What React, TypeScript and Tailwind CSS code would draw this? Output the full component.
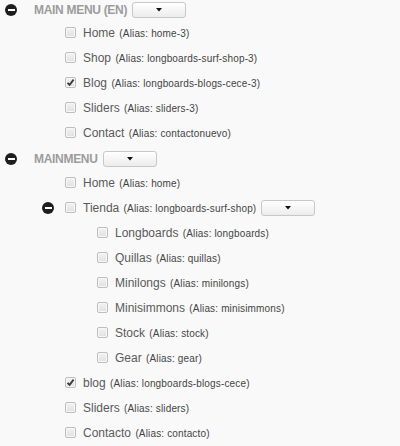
import React from "react";

const Minus = () => (
  <span className="flex h-[12px] w-[12px] shrink-0 items-center justify-center rounded-full bg-[#1e1e1e]">
    <span className="h-[2px] w-[7px] bg-white" />
  </span>
);

const Caret = () => (
  <button className="flex h-[16px] w-[54px] shrink-0 items-center justify-center rounded-[3px] border border-[#c8c8c8] bg-gradient-to-b from-white to-[#ececec] shadow-[inset_0_1px_0_#fff]">
    <svg width="6" height="4" viewBox="0 0 6 4">
      <path d="M0 0 L6 0 L3 3.5 Z" fill="#111" />
    </svg>
  </button>
);

const Check = ({ checked }: { checked?: boolean }) => (
  <span className="flex h-[11px] w-[11px] shrink-0 items-center justify-center rounded-[2px] border border-[#bdbdbd] bg-gradient-to-b from-[#f3f3f3] to-[#e0e0e0] shadow-[inset_0_0_0_1px_#f8f8f8]">
    {checked && (
      <svg width="9" height="9" viewBox="0 0 9 9">
        <path d="M1.5 4.8 L3.6 6.9 L7.6 1.6" stroke="#3a3a3a" strokeWidth="1.8" fill="none" />
      </svg>
    )}
  </span>
);

const Label = ({ name, alias }: { name: string; alias: string }) => (
  <span className="ml-[7px] whitespace-nowrap text-[12px] text-[#5a5a5a]">
    {name}{" "}
    <span className="ml-[1px] text-[10px] tracking-[0.15px] text-[#444]">(Alias: {alias})</span>
  </span>
);

const Item = ({
  name,
  alias,
  checked,
  pl,
}: {
  name: string;
  alias: string;
  checked?: boolean;
  pl: "l1" | "l2";
}) => (
  <div className={`flex h-[25px] items-center ${pl === "l1" ? "pl-[65px]" : "pl-[97px]"}`}>
    <Check checked={checked} />
    <Label name={name} alias={alias} />
  </div>
);

const Heading = ({ title }: { title: string }) => (
  <div className="flex items-center pl-[5px]">
    <Minus />
    <span className="ml-[17px] text-[12px] font-bold tracking-[-0.3px] text-[#9c9c9c]">{title}</span>
    <span className="ml-[5px]">
      <Caret />
    </span>
  </div>
);

export default function App() {
  return (
    <div
      className="h-[446px] w-[400px] overflow-hidden bg-[#f9f9f9]"
      style={{ fontFamily: '"Liberation Sans", Arial, sans-serif' }}
    >
      <div className="flex h-[20px] items-center">
        <Heading title="MAIN MENU (EN)" />
      </div>
      <Item pl="l1" name="Home" alias="home-3" />
      <Item pl="l1" name="Shop" alias="longboards-surf-shop-3" />
      <Item pl="l1" name="Blog" alias="longboards-blogs-cece-3" checked />
      <Item pl="l1" name="Sliders" alias="sliders-3" />
      <Item pl="l1" name="Contact" alias="contactonuevo" />
      <div className="mt-[3px] flex h-[22px] items-center">
        <Heading title="MAINMENU" />
      </div>
      <Item pl="l1" name="Home" alias="home" />
      <div className="flex h-[25px] items-center pl-[42px]">
        <Minus />
        <span className="ml-[11px]">
          <Check />
        </span>
        <Label name="Tienda" alias="longboards-surf-shop" />
        <span className="ml-[5px]">
          <Caret />
        </span>
      </div>
      <Item pl="l2" name="Longboards" alias="longboards" />
      <Item pl="l2" name="Quillas" alias="quillas" />
      <Item pl="l2" name="Minilongs" alias="minilongs" />
      <Item pl="l2" name="Minisimmons" alias="minisimmons" />
      <Item pl="l2" name="Stock" alias="stock" />
      <Item pl="l2" name="Gear" alias="gear" />
      <Item pl="l1" name="blog" alias="longboards-blogs-cece" checked />
      <Item pl="l1" name="Sliders" alias="sliders" />
      <Item pl="l1" name="Contacto" alias="contacto" />
    </div>
  );
}
